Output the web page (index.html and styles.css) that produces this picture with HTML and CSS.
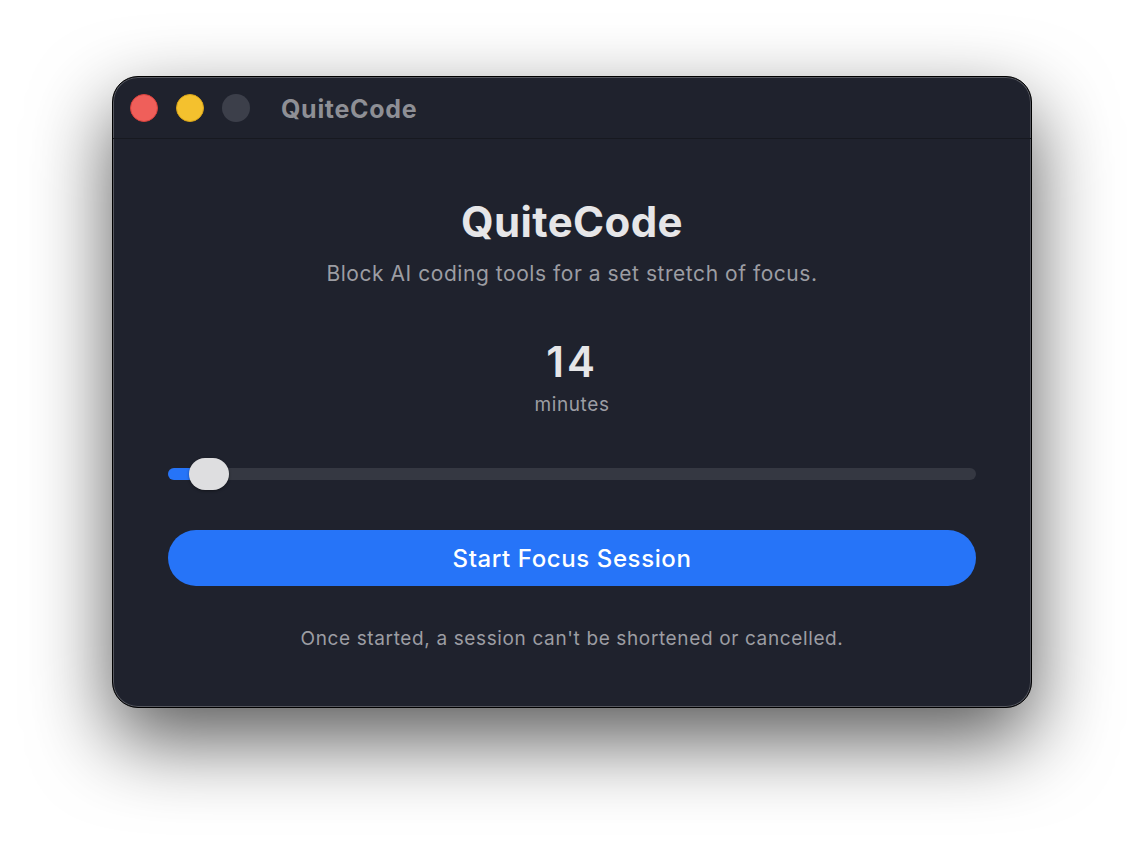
FILE: index.html
```html
<!DOCTYPE html>
<html>
<head>
<meta charset="utf-8"/>
<title>QuiteCode</title>
<link rel="stylesheet" href="styles.css">
</head>
<body>

<div class="window">
	<div class="titlebar">
		<span class="light close"></span>
		<span class="light minimize"></span>
		<span class="light zoom"></span>
		<span class="wintitle">QuiteCode</span>
	</div>
	<div class="content">
		<h1>QuiteCode</h1>
		<p class="tagline">Block AI coding tools for a set stretch of focus.</p>
		<div class="duration">
			<div class="count">14</div>
			<div class="unit">minutes</div>
		</div>
		<div class="slider">
			<div class="fill"></div>
			<div class="thumb"></div>
		</div>
		<button class="start">Start Focus Session</button>
		<p class="note">Once started, a session can't be shortened or cancelled.</p>
	</div>
</div>

</body>
</html>
```

FILE: styles.css
```css
body {
	margin: 0;
	padding: 76px 0 0 0;
	min-height: 100vh;
	box-sizing: border-box;
	background: #fff;
	font-family: Inter, "Liberation Sans", sans-serif;
	display: flex;
	justify-content: center;
	align-items: flex-start;
}
/* window frame */
.window {
	width: 920px;
	height: 632px;
	box-sizing: border-box;
	background: #1f222d;
	border-radius: 26px;
	border: 1px solid #000;
	box-shadow: inset 0 0 0 1px #55575f, 0 32px 80px rgba(0, 0, 0, 0.65);
	overflow: hidden;
}
.titlebar {
	height: 62px;
	display: flex;
	align-items: center;
	padding: 0 0 0 17px;
	border-bottom: 1px solid #171920;
	box-sizing: border-box;
}
.light {
	width: 28px;
	height: 28px;
	border-radius: 50%;
	margin-right: 18px;
	box-sizing: border-box;
}
.close {
	background: #ef5f5a;
	border: 1px solid #d8413c;
}
.minimize {
	background: #f4c12e;
	border: 1px solid #d9a519;
}
.zoom {
	background: #3c3f4a;
}
.wintitle {
	margin: 2px 0 0 13px;
	font-size: 25px;
	font-weight: 700;
	letter-spacing: 0.7px;
	color: #8e8f95;
}
/* main panel */
.content {
	padding: 0 55px;
	text-align: center;
}
h1 {
	margin: 59px 0 0 0;
	font-size: 42px;
	font-weight: 700;
	letter-spacing: 0.4px;
	color: #e6e6e8;
	line-height: 48px;
}
.tagline {
	margin: 15px 0 0 0;
	font-size: 21px;
	letter-spacing: 0.55px;
	color: #9c9da3;
	line-height: 26px;
}
.duration {
	margin-top: 51px;
}
.count {
	font-size: 42px;
	font-weight: 600;
	letter-spacing: 3px;
	color: #e6e6e8;
	line-height: 48px;
}
.unit {
	margin-top: 7px;
	font-size: 19px;
	letter-spacing: 0.6px;
	color: #9c9da3;
	line-height: 24px;
}
/* duration slider */
.slider {
	position: relative;
	margin-top: 51px;
	height: 12px;
	border-radius: 6px;
	background: #353842;
}
.slider .fill {
	width: 42px;
	height: 12px;
	border-radius: 6px;
	background: #2674f8;
}
.slider .thumb {
	position: absolute;
	left: 21px;
	top: -10px;
	width: 40px;
	height: 32px;
	border-radius: 16px;
	background: #dedee0;
	box-shadow: 0 1px 3px rgba(0, 0, 0, 0.4);
}
.start {
	display: block;
	width: 100%;
	margin-top: 50px;
	height: 56px;
	border: none;
	border-radius: 28px;
	background: #2674f8;
	color: #fff;
	font-family: inherit;
	font-size: 24px;
	font-weight: 500;
	letter-spacing: 0.6px;
}
.note {
	margin: 41px 0 0 0;
	font-size: 19px;
	letter-spacing: 0.63px;
	color: #9c9da3;
	line-height: 24px;
}
```
